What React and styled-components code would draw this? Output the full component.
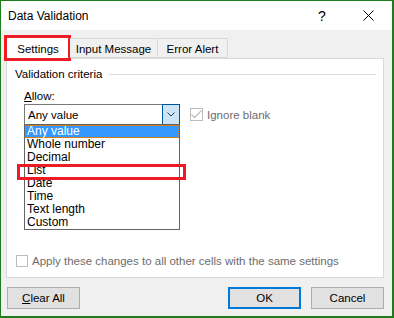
import React from 'react';
import styled, { createGlobalStyle } from 'styled-components';

const GlobalStyle = createGlobalStyle`
    html, body {
        margin: 0;
        padding: 0;
        background: #fff;
    }
    body {
        font-family: "Liberation Sans", Arial, sans-serif;
        font-size: 11.5px;
        color: #000;
    }
    * {
        box-sizing: border-box;
    }
`;

const Window = styled.div`
    width: 394px;
    height: 318px;
    display: flex;
    flex-direction: column;
    background: #f0f0f0;
    border-style: solid;
    border-color: #1d7d1d;
    border-width: 1px 2px 2px 1px;
`;

const TitleBar = styled.div`
    height: 29px;
    flex-shrink: 0;
    display: flex;
    align-items: center;
    padding: 0 14px 0 7px;
    background: #fff;
`;

const Title = styled.span`
    flex: 1;
    font-size: 12px;
`;

const HelpButton = styled.span`
    width: 20px;
    text-align: center;
    font-size: 14px;
    margin-right: 26px;
`;

const CloseButton = styled.span`
    width: 20px;
    display: flex;
    justify-content: center;
`;

const Body = styled.div`
    flex: 1;
    display: flex;
    flex-direction: column;
    padding: 6px 8px 0 5px;
`;

const TabRow = styled.div`
    display: flex;
    align-items: flex-end;
    height: 22px;
    position: relative;
    z-index: 1;
`;

const Tab = styled.div`
    position: relative;
    width: ${p => p.$width}px;
    height: ${p => (p.$active ? 23 : 20)}px;
    margin-bottom: ${p => (p.$active ? -1 : 0)}px;
    display: flex;
    align-items: center;
    justify-content: center;
    background: ${p => (p.$active ? '#fff' : '#f0f0f0')};
    border: 1px solid #d9d9d9;
    border-bottom: ${p => (p.$active ? 'none' : '1px solid #d9d9d9')};
    border-left: ${p => (p.$first ? '1px solid #d9d9d9' : 'none')};
    padding-top: 2px;
`;

const Highlight = styled.div`
    position: absolute;
    left: ${p => p.$left}px;
    top: ${p => p.$top}px;
    width: ${p => p.$width}px;
    height: ${p => p.$height}px;
    border: 3px solid #ed1c24;
    pointer-events: none;
`;

const Panel = styled.div`
    height: 220px;
    display: flex;
    flex-direction: column;
    background: #fff;
    border: 1px solid #d9d9d9;
    position: relative;
`;

const GroupHeader = styled.div`
    display: flex;
    align-items: center;
    height: 14px;
    margin-top: 8px;
    padding: 0 7px 0 8px;
`;

const GroupLine = styled.div`
    flex: 1;
    height: 1px;
    margin-left: 7px;
    background: #dcdcdc;
`;

const FieldLabel = styled.div`
    height: 14px;
    line-height: 14px;
    margin-top: 8px;
    padding-left: 17px;
`;

const ControlsRow = styled.div`
    display: flex;
    align-items: center;
    margin-top: 1px;
    padding-left: 17px;
`;

const Combo = styled.div`
    position: relative;
    width: 156px;
    height: 21px;
    display: flex;
    align-items: center;
    padding-left: 3px;
    border: 1px solid #7a7a7a;
    background: #fff;
`;

const ComboValue = styled.span`
    flex: 1;
`;

const ComboButton = styled.div`
    width: 18px;
    align-self: stretch;
    margin: -1px -1px -1px 0;
    display: flex;
    align-items: center;
    justify-content: center;
    background: #cce4f7;
    border: 1px solid #005499;
`;

const DropList = styled.div`
    position: absolute;
    left: -1px;
    top: 19px;
    width: 156px;
    border: 1px solid #646464;
    background: #fff;
    z-index: 2;
`;

const DropItem = styled.div`
    position: relative;
    height: 13px;
    line-height: 13px;
    padding-left: 2px;
    font-size: 12px;
    white-space: nowrap;
    background: ${p => (p.$selected ? '#3399ff' : 'transparent')};
    color: ${p => (p.$selected ? '#fff' : '#000')};
    outline: ${p => (p.$selected ? '1px dotted #d9822b' : 'none')};
    outline-offset: -1px;
`;

const CheckRow = styled.label`
    display: flex;
    align-items: center;
    color: #6d6d6d;
`;

const Box = styled.span`
    width: ${p => p.$size}px;
    height: ${p => p.$size}px;
    display: flex;
    align-items: center;
    justify-content: center;
    border: 1px solid #bcbcbc;
    background: #fff;
    margin-right: 4px;
`;

const IgnoreRow = styled(CheckRow)`
    margin-left: 10px;
`;

const ApplyRow = styled(CheckRow)`
    margin-top: auto;
    margin-bottom: 10px;
    padding-left: 9px;
`;

const ButtonRow = styled.div`
    display: flex;
    margin-top: 9px;
    padding-left: 1px;
`;

const Button = styled.div`
    width: 73px;
    height: 22px;
    display: flex;
    align-items: center;
    justify-content: center;
    background: #e1e1e1;
    border: ${p => (p.$primary ? '2px solid #0078d7' : '1px solid #adadad')};
    margin-left: ${p => p.$gap || 0}px;
`;

const options = ['Any value', 'Whole number', 'Decimal', 'List', 'Date', 'Time', 'Text length', 'Custom'];

const App = () => {
    return (
        <>
            <GlobalStyle />
            <Window>
                <TitleBar>
                    <Title>Data Validation</Title>
                    <HelpButton>?</HelpButton>
                    <CloseButton>
                        <svg width="11" height="11" viewBox="0 0 11 11">
                            <path d="M0.5 0.5 L10.5 10.5 M10.5 0.5 L0.5 10.5" stroke="#000" strokeWidth="1" fill="none" />
                        </svg>
                    </CloseButton>
                </TitleBar>
                <Body>
                    <TabRow>
                        <Tab $active $first $width={64}>
                            Settings
                            <Highlight $left={-3} $top={-2} $width={67} $height={26} />
                        </Tab>
                        <Tab $width={88}>Input Message</Tab>
                        <Tab $width={70}>Error Alert</Tab>
                    </TabRow>
                    <Panel>
                        <GroupHeader>
                            Validation criteria
                            <GroupLine />
                        </GroupHeader>
                        <FieldLabel>
                            <u>A</u>llow:
                        </FieldLabel>
                        <ControlsRow>
                            <Combo>
                                <ComboValue>Any value</ComboValue>
                                <ComboButton>
                                    <svg width="8" height="5" viewBox="0 0 8 5">
                                        <path d="M0.5 0.5 L4 4 L7.5 0.5" stroke="#333" strokeWidth="1" fill="none" />
                                    </svg>
                                </ComboButton>
                                <DropList>
                                    {options.map((o, i) => (
                                        <DropItem key={o} $selected={i === 0}>
                                            {o}
                                        </DropItem>
                                    ))}
                                    <Highlight $left={-8} $top={39} $width={169} $height={16} />
                                </DropList>
                            </Combo>
                            <IgnoreRow>
                                <Box $size={13}>
                                    <svg width="11" height="9" viewBox="0 0 11 9">
                                        <path d="M0.5 4.5 L3.5 7.5 L10.5 0.5" stroke="#bfbfbf" strokeWidth="1.3" fill="none" />
                                    </svg>
                                </Box>
                                Ignore blank
                            </IgnoreRow>
                        </ControlsRow>
                        <ApplyRow>
                            <Box $size={12} />
                            Apply these changes to all other cells with the same settings
                        </ApplyRow>
                    </Panel>
                    <ButtonRow>
                        <Button>
                            <span>
                                <u>C</u>lear All
                            </span>
                        </Button>
                        <Button $primary $gap={148}>OK</Button>
                        <Button $gap={10}>Cancel</Button>
                    </ButtonRow>
                </Body>
            </Window>
        </>
    );
};

export default App;
